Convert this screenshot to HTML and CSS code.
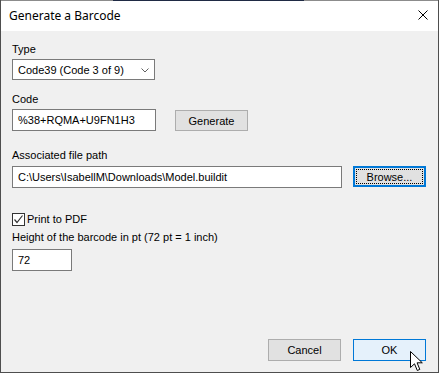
FILE: index.html
```html
<!DOCTYPE html>
<html>
<head>
<meta charset="utf-8">
<link rel="stylesheet" href="styles.css">
</head>
<body>
<div class="window">
  <div class="topline"><span class="behind"></span></div>
  <div class="titlebar">
    <span class="title">Generate a Barcode</span>
    <svg class="close" width="10" height="10" viewBox="0 0 10 10"><path d="M0.5 0.5 L9.5 9.5 M9.5 0.5 L0.5 9.5" stroke="#000" stroke-width="1" fill="none"/></svg>
  </div>
  <div class="content">
    <div class="label">Type</div>
    <div class="select">
      <span>Code39 (Code 3 of 9)</span>
      <svg class="chev" width="8" height="5" viewBox="0 0 8 5"><path d="M0.5 0.5 L4 4 L7.5 0.5" stroke="#606060" stroke-width="1" fill="none"/></svg>
    </div>
    <div class="label gap13">Code</div>
    <div class="row">
      <div class="input code">%38+RQMA+U9FN1H3</div>
      <div class="btn gen">Generate</div>
    </div>
    <div class="label gap18">Associated file path</div>
    <div class="row">
      <div class="input path">C:\Users\IsabellM\Downloads\Model.buildit</div>
      <div class="btn browse"><span class="focus">Browse...</span></div>
    </div>
    <div class="check-row">
      <span class="checkbox"><svg width="11" height="11" viewBox="0 0 11 11"><path d="M1.5 5.5 L4 8.5 L9.5 1.5" stroke="#333" stroke-width="1.2" fill="none"/></svg></span>
      <span class="check-label">Print to PDF</span>
    </div>
    <div class="label gap5">Height of the barcode in pt (72 pt = 1 inch)</div>
    <div class="input small">72</div>
    <div class="spacer"></div>
    <div class="buttons">
      <div class="btn">Cancel</div>
      <div class="btn ok">OK</div>
    </div>
  </div>
  <svg class="cursor" width="14" height="22" viewBox="0 0 14 22"><path d="M0.5 0.5 L0.5 16.5 L4.5 12.8 L7.3 19.5 L9.8 18.4 L7.1 11.8 L12.3 11.8 Z" fill="#fff" stroke="#000" stroke-width="1"/></svg>
</div>
</body>
</html>
```
FILE: styles.css
```css
* { box-sizing: border-box; }
html, body { margin: 0; padding: 0; background: #f0f0f0; }
.window {
  position: relative;
  width: 439px;
  height: 373px;
  border-left: 1px solid #4e4e4e;
  border-right: 1px solid #4e4e4e;
  border-bottom: 1px solid #4e4e4e;
  display: flex;
  flex-direction: column;
  background: #f0f0f0;
  overflow: hidden;
}
.topline { height: 1px; background: #8c8c8c; position: relative; }
.behind { position: absolute; left: 112px; width: 191px; top: 0; height: 1px; background: #1f2a44; }
.titlebar {
  height: 30px;
  background: #fff;
  display: flex;
  align-items: center;
  padding: 0 10px 0 8px;
  justify-content: space-between;
}
.title {
  font-family: "Segoe UI", "Noto Sans", sans-serif;
  font-size: 12px;
  color: #000;
  margin-top: -2px;
}
.close { margin-top: -2px; }
.content {
  flex: 1;
  display: flex;
  flex-direction: column;
  padding: 12px 11px 11px 11px;
  font-family: "Liberation Sans", Arial, sans-serif;
  font-size: 11px;
  color: #000;
}
.label { line-height: 13px; height: 13px; margin-bottom: 3px; }
.gap13 { margin-top: 13px; }
.gap18 { margin-top: 18px; margin-bottom: 4px; }
.gap5 { margin-top: 5px; margin-bottom: 5px; }
.select {
  width: 143px;
  height: 21px;
  border: 1px solid #7a7a7a;
  background: #fff;
  display: flex;
  align-items: center;
  justify-content: space-between;
  padding: 0 5px 0 5px;
}
.chev { margin-top: 1px; }
.row { display: flex; align-items: flex-start; }
.input {
  height: 22px;
  border: 1px solid #7a7a7a;
  background: #fff;
  display: flex;
  align-items: center;
  padding-left: 5px;
  white-space: nowrap;
  overflow: hidden;
}
.code { width: 144px; }
.path { width: 330px; }
.small { width: 60px; }
.btn {
  width: 73px;
  height: 22px;
  background: #e1e1e1;
  border: 1px solid #adadad;
  display: flex;
  align-items: center;
  justify-content: center;
}
.gen { margin-left: 19px; margin-top: 1px; height: 21px; }
.browse {
  margin-left: 11px;
  height: 21px;
  border: 2px solid #0078d7;
  padding: 1px;
}
.focus {
  width: 100%;
  height: 100%;
  border: 1px dotted #000;
  display: flex;
  align-items: center;
  justify-content: center;
}
.check-row { display: flex; align-items: center; margin-top: 25px; height: 13px; }
.checkbox {
  width: 13px;
  height: 13px;
  border: 1px solid #333;
  background: #fff;
  display: flex;
  align-items: center;
  justify-content: center;
}
.check-label { margin-left: 2px; line-height: 13px; }
.spacer { flex: 1; }
.buttons { display: flex; justify-content: flex-end; gap: 12px; padding-right: 1px; }
.ok { background: #e5f1fb; border-color: #0078d7; }
.cursor { position: absolute; left: 409px; top: 351px; }
```
